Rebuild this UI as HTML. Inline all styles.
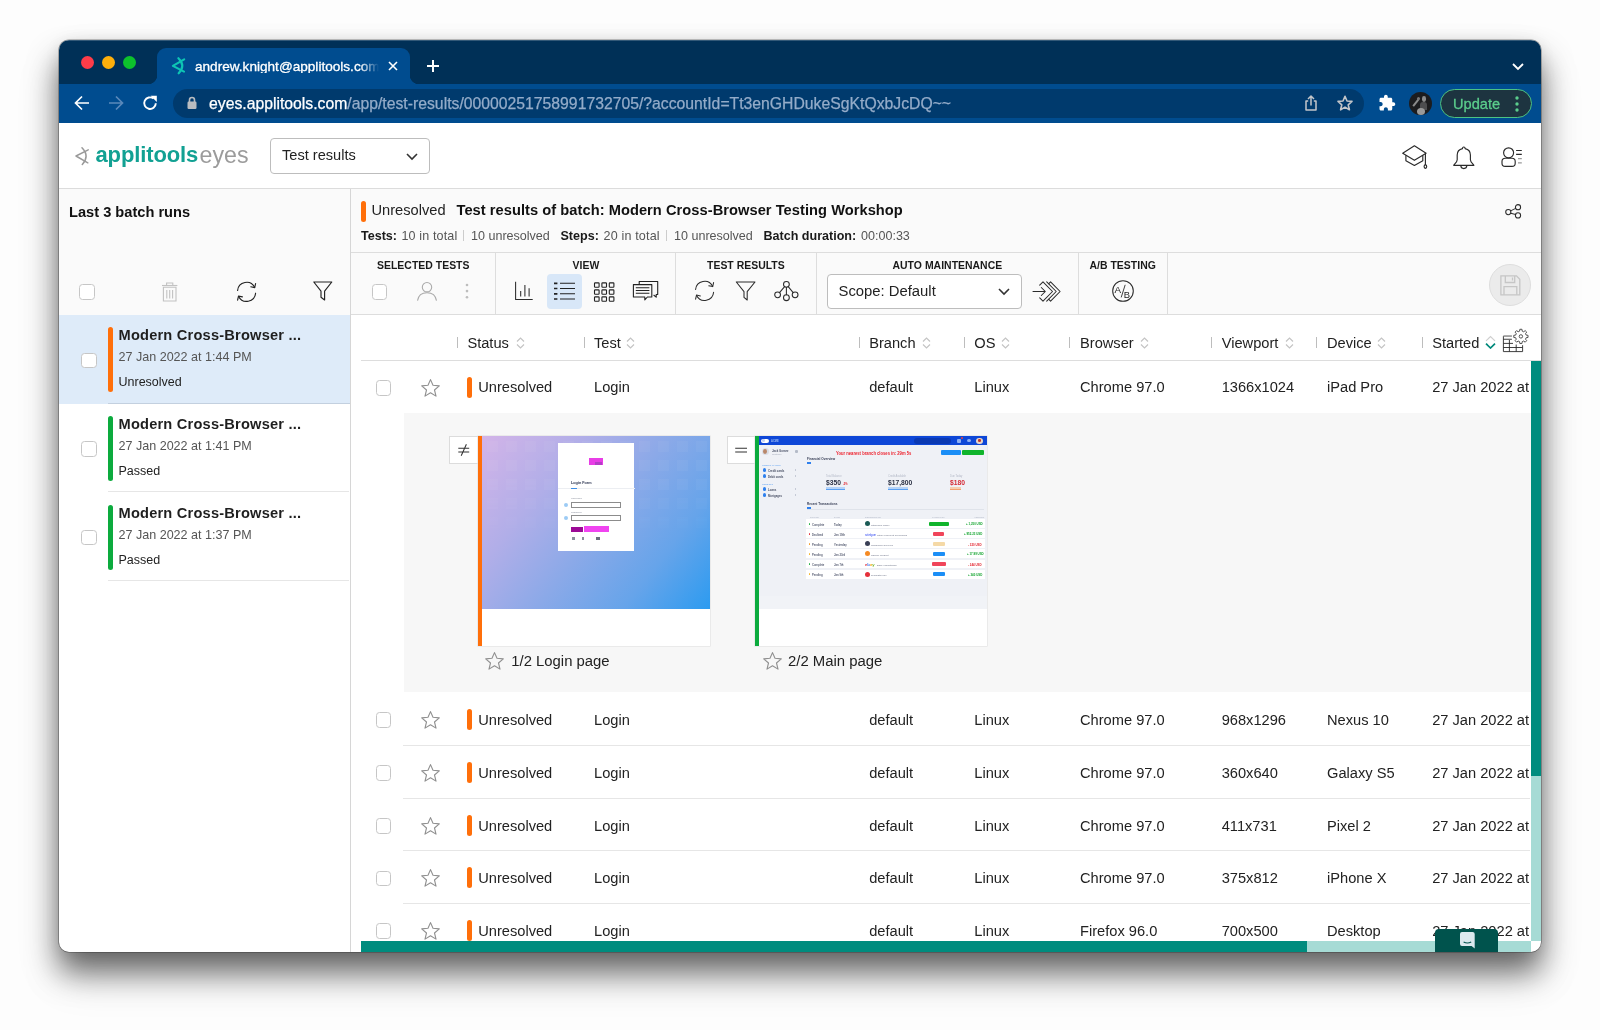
<!DOCTYPE html>
<html><head><meta charset="utf-8"><title>Applitools Eyes</title>
<style>
*{box-sizing:border-box;margin:0;padding:0}
html,body{width:1600px;height:1030px;overflow:hidden;background:#fdfdfd}
body{font-family:"Liberation Sans",Arial,sans-serif;color:#1e1e1e;position:relative}
.win{position:absolute;left:59px;top:40px;width:1482px;height:912px;border-radius:10px;overflow:hidden;background:#fff;
 box-shadow:0 0 0 .6px rgba(0,0,0,.42),0 20px 30px rgba(0,0,0,.53),0 24px 46px rgba(0,0,0,.14),0 2px 16px rgba(0,0,0,.08)}
.pg{position:absolute;left:-59px;top:-40px;width:1600px;height:1030px;will-change:transform}
.a{position:absolute}
.t{position:absolute;white-space:nowrap;line-height:1}
/* chrome */
.titlebar{left:59px;top:40px;width:1482px;height:44px;background:#003057}
.toolbar{left:59px;top:84px;width:1482px;height:39px;background:#004c8f}
.tab{left:157px;top:48px;width:253px;height:36px;background:#004c8f;border-radius:9px 9px 0 0}
.tab:before,.tab:after{content:"";position:absolute;bottom:0;width:9px;height:9px}
.tab:before{left:-9px;background:radial-gradient(circle at 0 0,transparent 9px,#004c8f 9.5px)}
.tab:after{right:-9px;background:radial-gradient(circle at 100% 0,transparent 9px,#004c8f 9.5px)}
.dot{width:13px;height:13px;border-radius:50%;top:56px}
.omni{left:173px;top:89px;width:1191px;height:29px;border-radius:15px;background:#003a6d}

.cb{position:absolute;width:16px;height:16px;border:1px solid #c6c6c6;border-radius:3.5px;background:#fff}
.bar{position:absolute;width:5px;border-radius:2.5px}
.or{background:#ff6f0a}.gr{background:#0cab3e}
.sbt{font-size:14.63px;font-weight:700;color:#1f1f1f;letter-spacing:.2px}
.sbd{font-size:12.55px;color:#555}
.sbs{font-size:12.5px;color:#222}

.ln{position:absolute;background:#dddddd}
.tl{font-size:10.45px;font-weight:700;color:#1a1a1a;letter-spacing:.02px}
.st{font-size:12.55px;color:#555}
.st b{color:#1a1a1a}
.th{font-size:14.65px;color:#222}
.td{font-size:14.65px;color:#222}
.hs{position:absolute;width:1px;height:11px;top:337px;background:#bdbdbd}
.ic{position:absolute;fill:none;stroke:#2b2b2b;stroke-width:1.05;stroke-linecap:round;stroke-linejoin:round}

.tn{position:absolute;overflow:hidden}
.tx{position:absolute;white-space:nowrap;line-height:1;transform-origin:0 0}
.k{position:absolute}
</style></head><body>
<div class="win"><div class="pg">
<!-- browser chrome -->
<div class="a titlebar"></div>
<div class="a toolbar"></div>
<div class="a tab"></div>
<div class="a dot" style="left:81px;background:#fe3c49"></div>
<div class="a dot" style="left:102px;background:#fdaf0b"></div>
<div class="a dot" style="left:123px;background:#0dc12c"></div>
<div class="t" style="left:195px;top:59.700px;font-size:13.6px;color:#fff;-webkit-text-stroke:.3px #fff;width:185px;overflow:hidden;-webkit-mask-image:linear-gradient(90deg,#000 165px,transparent 184px)">andrew.knight@applitools.com</div>
<div class="a omni"></div>
<div class="t" style="left:209px;top:96px;font-size:15.75px;color:#94acc9;-webkit-text-stroke:.25px"><span style="color:#fff">eyes.applitools.com</span>/app/test-results/00000251758991732705/?accountId=Tt3enGHDukeSgKtQxbJcDQ~~</div>

<!-- tab favicon -->
<svg class="a" style="left:171px;top:57px" width="17" height="18" viewBox="0 0 17 18"><g fill="none" stroke="#0ec5b4" stroke-width="2.1" stroke-linecap="round" stroke-linejoin="round"><path d="M13.2 2.3 L1.9 8.9 L13 14.600"/><path d="M7.4 1.200 Q15 8.500 7.700 16.300"/></g></svg>
<!-- tab close / new tab / chevron -->
<svg class="a" style="left:387px;top:60px" width="12" height="12" viewBox="0 0 12 12"><path d="M2 2 L10 10 M10 2 L2 10" stroke="#fff" stroke-width="1.6" fill="none"/></svg>
<svg class="a" style="left:426px;top:59px" width="14" height="14" viewBox="0 0 14 14"><path d="M7 1 V13 M1 7 H13" stroke="#fff" stroke-width="2" fill="none"/></svg>
<svg class="a" style="left:1511px;top:62px" width="14" height="10" viewBox="0 0 14 10"><path d="M2 2 L7 7 L12 2" stroke="#fff" stroke-width="1.8" fill="none"/></svg>
<!-- nav -->
<svg class="a" style="left:73px;top:94px" width="18" height="18" viewBox="0 0 18 18"><path d="M16 9 H3 M9 2.5 L2.5 9 L9 15.5" stroke="#fff" stroke-width="1.7" fill="none"/></svg>
<svg class="a" style="left:107px;top:94px" width="18" height="18" viewBox="0 0 18 18"><path d="M2 9 H15 M9 2.5 L15.5 9 L9 15.5" stroke="#5a89ba" stroke-width="1.7" fill="none"/></svg>
<svg class="a" style="left:141px;top:94px" width="18" height="18" viewBox="0 0 18 18"><path d="M14.800 9.200 A5.800 5.800 0 1 1 12.600 4.600" stroke="#fff" stroke-width="1.900" fill="none"/><path d="M9.600 1.800 H15.800 V8 Z" fill="#fff"/></svg>
<!-- lock -->
<svg class="a" style="left:186px;top:96px" width="12" height="14" viewBox="0 0 12 14"><rect x="1.5" y="5.5" width="9" height="7.5" rx="1.2" fill="#b9bcc0"/><path d="M3.5 6 V4 A2.5 2.5 0 0 1 8.500 4 V6" stroke="#b9bcc0" stroke-width="1.6" fill="none"/></svg>
<!-- share -->
<svg class="a" style="left:1303px;top:94px" width="16" height="18" viewBox="0 0 16 18"><g fill="none" stroke="#c3c6ca" stroke-width="1.5" stroke-linejoin="round"><path d="M5.2 7 H3 V16 H13 V7 H10.800"/><path d="M8 11.500 V2.200 M5 5 L8 2 L11 5"/></g></svg>
<!-- star -->
<svg class="a" style="left:1336px;top:94px" width="18" height="18" viewBox="0 0 18 18"><path d="M9 2.300 L11 7 L16 7.400 L12.200 10.800 L13.400 15.800 L9 13.100 L4.600 15.800 L5.800 10.800 L2 7.400 L7 7 Z" fill="none" stroke="#c3c6ca" stroke-width="1.6" stroke-linejoin="round"/></svg>
<!-- puzzle -->
<svg class="a" style="left:1378px;top:94px" width="18" height="18" viewBox="0 0 24 24"><path fill="#fff" d="M20.500 11H19V7c0-1.100-.9-2-2-2h-4V3.500C13 2.120 11.880 1 10.500 1S8 2.120 8 3.500V5H4c-1.100 0-1.990.9-1.990 2v3.800H3.500c1.490 0 2.700 1.210 2.700 2.700s-1.210 2.700-2.700 2.700H2V20c0 1.100.9 2 2 2h3.800v-1.500c0-1.490 1.210-2.700 2.700-2.700 1.490 0 2.700 1.210 2.700 2.700V22H17c1.100 0 2-.9 2-2v-4h1.500c1.380 0 2.500-1.120 2.500-2.500S21.880 11 20.500 11z"/></svg>
<!-- avatar -->
<div class="a" style="left:1409px;top:92px;width:23px;height:23px;border-radius:50%;background:#1c1c1e;overflow:hidden"><div class="a" style="left:12.500px;top:4px;width:4.500px;height:5.500px;border-radius:50%;background:#8c8c8c"></div><div class="a" style="left:10.500px;top:9.500px;width:7px;height:8px;border-radius:3px 3px 0 0;background:#4d4d4f"></div><div class="a" style="left:7.500px;top:15.500px;width:8px;height:7px;border-radius:50%;background:#9a9a9a"></div><div class="a" style="left:5.500px;top:6px;width:1.600px;height:9px;background:#8a8a8a;transform:rotate(38deg)"></div><div class="a" style="left:7.500px;top:4.500px;width:3px;height:3px;border-radius:50%;background:#777"></div></div>
<!-- update -->
<div class="a" style="left:1440px;top:89px;width:92px;height:29px;border-radius:15px;background:#1d3440;border:1.3px solid #4cc384"></div>
<div class="t" style="left:1453px;top:96.500px;font-size:14.6px;color:#5bcd8c;-webkit-text-stroke:.3px #5bcd8c">Update</div>
<svg class="a" style="left:1514px;top:95px" width="6" height="18" viewBox="0 0 6 18"><g fill="#5bcd8c"><circle cx="3" cy="3" r="1.7"/><circle cx="3" cy="9" r="1.7"/><circle cx="3" cy="15" r="1.700"/></g></svg>
<!--CHROME-ICONS-->

<!-- app header -->
<div class="a" style="left:59px;top:188px;width:1482px;height:1px;background:#dcdcdc"></div>
<svg class="a" style="left:73px;top:146px" width="18" height="20" viewBox="0 0 18 20"><g fill="none" stroke="#9a9a9a" stroke-width="1.5" stroke-linecap="round" stroke-linejoin="round"><path d="M15.200 3.800 L3 10 L14.800 16.800"/><path d="M9 1.800 Q17 10 9.300 18.400"/></g></svg>
<div class="t" style="left:95.5px;top:144px;font-size:22px;font-weight:700;color:#12a193;letter-spacing:-0.12px">applitools</div>
<div class="t" style="left:199.5px;top:143.600px;font-size:23.2px;color:#9b9b9b">eyes</div>
<div class="a" style="left:270px;top:138px;width:160px;height:36px;border:1px solid #bdbdbd;border-radius:4px;background:#fff"></div>
<div class="t" style="left:282px;top:148px;font-size:14.6px;color:#222">Test results</div>
<svg class="a" style="left:405px;top:152px" width="14" height="9" viewBox="0 0 14 9"><path d="M2 2 L7 7 L12 2" stroke="#333" stroke-width="1.600" fill="none"/></svg>
<!-- grad cap -->
<svg class="a" style="left:1400px;top:143px" width="30" height="28" viewBox="0 0 30 28"><g fill="none" stroke="#2a2a2a" stroke-width="1.15" stroke-linejoin="round"><path d="M14.400 2.800 L26.100 10.300 L14.400 17.300 L2.700 10.300 Z"/><path d="M5.900 12.300 V17.800 L14.400 22.500 L22.800 17.800 V12.300"/><path d="M25.400 10.800 V22"/><ellipse cx="25.400" cy="23.600" rx="1.300" ry="1.700"/></g></svg>
<!-- bell -->
<svg class="a" style="left:1450px;top:143px" width="28" height="28" viewBox="0 0 28 28"><g fill="none" stroke="#2a2a2a" stroke-width="1.15" stroke-linejoin="round"><path d="M13.800 4 C12.900 4 12.400 4.800 12.500 5.600 C9.300 6.300 7.200 8.900 7.200 12 V16.800 C7.200 19 5 20.600 3.700 22.300 H23.900 C22.600 20.600 20.400 19 20.400 16.800 V12 C20.400 8.900 18.300 6.300 15.100 5.600 C15.200 4.800 14.700 4 13.800 4 Z"/><path d="M10.800 22.600 A3 3 0 0 0 16.800 22.600"/></g></svg>
<!-- user list -->
<svg class="a" style="left:1498px;top:143px" width="28" height="28" viewBox="0 0 28 28"><g fill="none" stroke="#2a2a2a" stroke-width="1.15"><circle cx="10.600" cy="9.800" r="5"/><rect x="4" y="15.200" width="13.200" height="8.200" rx="3.200"/><path d="M18.100 7.500 H23.800 M18.100 11.400 H23.800"/><path d="M20 15.600 H23.800 M20 19.800 H23.800" stroke="#9a9a9a"/></g></svg>
<!--APP-HEADER-->

<!-- sidebar -->
<div class="a" style="left:59px;top:189px;width:291px;height:126px;background:#fafafa"></div>
<div class="a" style="left:350px;top:189px;width:1px;height:763px;background:#d6d6d6"></div>
<div class="t" style="left:69px;top:205px;font-size:14.63px;font-weight:700;color:#111">Last 3 batch runs</div>
<div class="cb" style="left:79px;top:284px"></div>
<!-- trash -->
<svg class="a" style="left:159px;top:280px" width="22" height="24" viewBox="0 0 22 24"><g fill="none" stroke="#c2c2c2" stroke-width="1.1"><path d="M3 5.500 H18.400"/><path d="M7.600 5.300 V3 H13.800 V5.300"/><path d="M4.400 7.300 H17 V21 H4.400 Z"/><path d="M7.800 10 V18.600 M10.700 10 V18.600 M13.600 10 V18.600"/></g></svg>
<!-- refresh -->
<svg class="a" style="left:234px;top:279px" width="26" height="26" viewBox="0 0 26 26"><g fill="none" stroke="#222" stroke-width="1.15" stroke-linecap="round" stroke-linejoin="round"><path d="M3.600 11.500 A9 9 0 0 1 20.600 8.300"/><path d="M21.600 4.500 L20.700 8.600 L16.800 7.800"/><path d="M21.600 14.200 A9 9 0 0 1 4.600 17.400"/><path d="M3.600 21.200 L4.500 17.100 L8.400 17.900"/></g></svg>
<!-- funnel -->
<svg class="a" style="left:311px;top:279px" width="24" height="24" viewBox="0 0 24 24"><path d="M2.800 3 H20.800 L13.600 12.200 V21 L10 18.200 V12.200 Z" fill="none" stroke="#222" stroke-width="1.150" stroke-linejoin="round"/></svg>
<!-- item 1 -->
<div class="a" style="left:59px;top:314.500px;width:291px;height:89px;background:#deebf9"></div>
<div class="a" style="left:108px;top:402.500px;width:242px;height:1px;background:#c3d0df"></div>
<div class="cb" style="left:81px;top:352.500px;width:15.500px;height:15.500px"></div>
<div class="bar or" style="left:108px;top:327px;height:65px"></div>
<div class="t sbt" style="left:118.500px;top:328px">Modern Cross-Browser ...</div>
<div class="t sbd" style="left:118.500px;top:351px">27 Jan 2022 at 1:44 PM</div>
<div class="t sbs" style="left:118.500px;top:375.500px">Unresolved</div>
<!-- item 2 -->
<div class="a" style="left:108px;top:491px;width:241px;height:1px;background:#e6e6e6"></div>
<div class="cb" style="left:81px;top:441px;width:15.500px;height:15.500px"></div>
<div class="bar gr" style="left:108px;top:416px;height:65px"></div>
<div class="t sbt" style="left:118.500px;top:417px">Modern Cross-Browser ...</div>
<div class="t sbd" style="left:118.500px;top:440px">27 Jan 2022 at 1:41 PM</div>
<div class="t sbs" style="left:118.500px;top:464.500px">Passed</div>
<!-- item 3 -->
<div class="a" style="left:108px;top:580px;width:241px;height:1px;background:#e6e6e6"></div>
<div class="cb" style="left:81px;top:529.500px;width:15.500px;height:15.500px"></div>
<div class="bar gr" style="left:108px;top:504.500px;height:65.500px"></div>
<div class="t sbt" style="left:118.500px;top:506px">Modern Cross-Browser ...</div>
<div class="t sbd" style="left:118.500px;top:529px">27 Jan 2022 at 1:37 PM</div>
<div class="t sbs" style="left:118.500px;top:553.500px">Passed</div>
<!--SIDEBAR-->

<!-- main: batch header -->
<div class="a" style="left:351px;top:189px;width:1190px;height:126px;background:#fafafa"></div>
<div class="ln" style="left:351px;top:252px;width:1190px;height:1px"></div>
<div class="ln" style="left:351px;top:314px;width:1190px;height:1px"></div>
<div class="bar or" style="left:361px;top:200.500px;height:21px"></div>
<div class="t" style="left:371.500px;top:202.600px;font-size:14.65px;color:#222">Unresolved</div>
<div class="t" style="left:456.500px;top:202.600px;font-size:14.65px;font-weight:700;color:#111;letter-spacing:.05px">Test results of batch: Modern Cross-Browser Testing Workshop</div>
<div class="t st" style="left:361px;top:229.6px"><b>Tests:</b></div>
<div class="t st" style="left:401.500px;top:229.6px;letter-spacing:.13px">10 in total</div>
<div class="a" style="left:463px;top:230px;width:1px;height:11px;background:#ccc"></div>
<div class="t st" style="left:471px;top:229.6px">10 unresolved</div>
<div class="t st" style="left:560.500px;top:229.6px"><b>Steps:</b></div>
<div class="t st" style="left:603.500px;top:229.6px;letter-spacing:.17px">20 in total</div>
<div class="a" style="left:666.200px;top:230px;width:1px;height:11px;background:#ccc"></div>
<div class="t st" style="left:674px;top:229.6px">10 unresolved</div>
<div class="t st" style="left:763.500px;top:229.6px"><b>Batch duration:</b></div>
<div class="t st" style="left:861px;top:229.6px">00:00:33</div>
<!-- share -->
<svg class="ic" style="left:1502px;top:202px" width="22" height="18" viewBox="0 0 22 18"><circle cx="6.300" cy="10.100" r="2.600"/><circle cx="16" cy="5.200" r="2.600"/><circle cx="16" cy="13.400" r="2.600"/><path d="M8.600 8.900 L13.700 6.400 M8.700 11.200 L13.700 12.400"/></svg>
<!-- toolbar separators -->
<div class="ln" style="left:495px;top:253px;width:1px;height:61px"></div>
<div class="ln" style="left:674.500px;top:253px;width:1px;height:61px"></div>
<div class="ln" style="left:815.500px;top:253px;width:1px;height:61px"></div>
<div class="ln" style="left:1078px;top:253px;width:1px;height:61px"></div>
<div class="ln" style="left:1167px;top:253px;width:1px;height:61px"></div>
<div class="t tl" style="left:377px;top:261.200px">SELECTED TESTS</div>
<div class="t tl" style="left:572.500px;top:261.200px">VIEW</div>
<div class="t tl" style="left:707px;top:261.200px">TEST RESULTS</div>
<div class="t tl" style="left:892.500px;top:261.200px">AUTO MAINTENANCE</div>
<div class="t tl" style="left:1089.500px;top:261.200px">A/B TESTING</div>

<!-- selected tests -->
<div class="cb" style="left:371.500px;top:284px;width:15.500px;height:15.500px"></div>
<svg class="a" style="left:415px;top:280px" width="24" height="23" viewBox="0 0 24 23"><g fill="none" stroke="#ababab" stroke-width="1.100"><circle cx="12" cy="7.200" r="4.700"/><path d="M2.500 20.700 C3.500 14.600 8 12.800 12 12.800 C16 12.800 20.500 14.600 21.500 20.700"/></g></svg>
<svg class="a" style="left:464px;top:282px" width="6" height="18" viewBox="0 0 6 18"><g fill="#bdbdbd"><circle cx="3" cy="3" r="1.300"/><circle cx="3" cy="9.100" r="1.300"/><circle cx="3" cy="15.200" r="1.300"/></g></svg>
<!-- view: bar chart -->
<svg class="ic" style="left:512px;top:279px" width="24" height="24" viewBox="0 0 24 24"><path d="M3.600 2.700 V20.400 H20.700" stroke-linecap="butt"/><path d="M8.700 12 V17.600 M12.900 6 V17.600 M17.100 9.300 V17.600" stroke-linecap="butt"/></svg>
<!-- view: list (active) -->
<div class="a" style="left:546.500px;top:273.500px;width:35.500px;height:35.500px;border-radius:4px;background:#d8e7f8"></div>
<svg class="a" style="left:551px;top:279px" width="27" height="24" viewBox="0 0 27 24"><g fill="none" stroke="#222"><path d="M3 4.300 H6.400 M3 9.500 H6.400 M3 14.800 H6.400 M3 20 H6.400" stroke-width="1.700"/><path d="M9 4.300 H24 M9 9.500 H24 M9 14.800 H24 M9 20 H24" stroke-width="1.100"/></g></svg>
<!-- view: grid -->
<svg class="a" style="left:592px;top:280px" width="24" height="24" viewBox="0 0 24 24"><g fill="none" stroke="#222" stroke-width="1.100"><rect x="2.500" y="2.900" width="4.600" height="4.300" rx=".7"/><rect x="9.900" y="2.900" width="4.600" height="4.300" rx=".7"/><rect x="17.300" y="2.900" width="4.600" height="4.300" rx=".7"/><rect x="2.500" y="9.900" width="4.600" height="4.300" rx=".7"/><rect x="9.900" y="9.900" width="4.600" height="4.300" rx=".7"/><rect x="17.300" y="9.900" width="4.600" height="4.300" rx=".7"/><rect x="2.500" y="16.900" width="4.600" height="4.300" rx=".7"/><rect x="9.900" y="16.900" width="4.600" height="4.300" rx=".7"/><rect x="17.300" y="16.900" width="4.600" height="4.300" rx=".7"/></g></svg>
<!-- view: comments -->
<svg class="a" style="left:631px;top:279px" width="30" height="24" viewBox="0 0 30 24"><g fill="none" stroke="#222" stroke-width="1.100" stroke-linejoin="round"><path d="M8.200 5.500 V2.500 H26.700 V15.500 H25.200 V18.200 L22.600 16"/><path d="M2.400 5.600 H20.800 V18 H16.400 L13.800 20.800 V18 H2.400 Z" fill="#fafafa"/><path d="M4.800 8.700 H18.400 M4.800 11.500 H18.400 M4.800 14.300 H18.400"/></g></svg>
<!-- test results: refresh, funnel, branch -->
<svg class="ic" style="left:691.500px;top:278px" width="26" height="26" viewBox="0 0 26 26"><path d="M3.600 11.500 A9 9 0 0 1 20.600 8.300"/><path d="M21.600 4.500 L20.700 8.600 L16.800 7.800"/><path d="M21.600 14.200 A9 9 0 0 1 4.600 17.400"/><path d="M3.600 21.200 L4.500 17.100 L8.400 17.900"/></svg>
<svg class="ic" style="left:734px;top:279px" width="24" height="24" viewBox="0 0 24 24"><path d="M2.300 3 H21 L13.200 12.600 V21 L10 18.400 V12.600 Z"/></svg>
<svg class="ic" style="left:772px;top:278px" width="28" height="26" viewBox="0 0 28 26"><circle cx="14.400" cy="6.300" r="2.900"/><circle cx="5.600" cy="16.800" r="2.900"/><circle cx="23.100" cy="16.800" r="2.900"/><circle cx="14.400" cy="19.700" r="2.900"/><path d="M14.400 9.200 V16.800 M12.600 8.600 L7.500 14.600 M16.200 8.600 L21.200 14.600"/></svg>
<!-- auto maintenance -->
<div class="a" style="left:827px;top:273.500px;width:195px;height:35px;border:1px solid #bdbdbd;border-radius:4px;background:#fff"></div>
<div class="t" style="left:838.500px;top:283.500px;font-size:14.83px;color:#222">Scope: Default</div>
<svg class="a" style="left:996.500px;top:287px" width="14" height="9" viewBox="0 0 14 9"><path d="M2 2 L7 7 L12 2" stroke="#333" stroke-width="1.600" fill="none"/></svg>
<svg class="ic" style="left:1031px;top:279px" width="33" height="25" viewBox="0 0 33 25"><path d="M2 12.500 H14 M10.300 8.500 L14.300 12.500 L10.300 16.500"/><path d="M8.700 6.200 L12 2.900 L21.500 12.500 L12 22.100 L8.700 18.800"/><path d="M15.700 2.900 L25.200 12.500 L15.700 22.100"/><path d="M19.600 2.900 L29.100 12.500 L19.600 22.100 L17.800 20.300 M19.600 2.900 L17.800 4.700"/></svg>
<!-- a/b -->
<svg class="a" style="left:1111px;top:279px" width="24" height="24" viewBox="0 0 24 24"><circle cx="12" cy="12" r="10.300" fill="none" stroke="#2b2b2b" stroke-width="1.050"/><path d="M14.200 5.800 L10.200 18.400" stroke="#2b2b2b" stroke-width=".9" fill="none"/><text x="3.600" y="13.600" font-family="Liberation Sans,Arial,sans-serif" font-size="9.800" fill="#222">A</text><text x="12.800" y="18.800" font-family="Liberation Sans,Arial,sans-serif" font-size="9.400" fill="#222">B</text></svg>
<!-- save -->
<div class="a" style="left:1489px;top:264px;width:42px;height:42px;border-radius:50%;background:#ebebeb;border:1px solid #dedede"></div>
<svg class="a" style="left:1499px;top:274px" width="23" height="23" viewBox="0 0 23 23"><g fill="none" stroke="#c6c6c6" stroke-width="1.300" stroke-linejoin="miter"><path d="M1.900 1.900 H17.500 L20.800 5.200 V20.800 H1.900 Z"/><path d="M6.300 2 V8.500 H15.700 V2"/><path d="M13.500 3.500 V6.500"/><path d="M5 20.800 V12.600 H17.800 V20.800"/></g></svg>

<!-- table header -->
<div class="ln" style="left:361px;top:359.500px;width:1180px;height:1px"></div>
<div class="hs" style="left:457.0px"></div><div class="t th" style="left:467.4px;top:335.700px">Status</div><svg class="a" style="left:515.5px;top:335.500px" width="9" height="14" viewBox="0 0 9 14"><path d="M1 5.500 L4.500 2 L8 5.500" fill="none" stroke="#c4c4c4" stroke-width="1.200"/><path d="M1 8.500 L4.500 12 L8 8.500" fill="none" stroke="#c4c4c4" stroke-width="1.200"/></svg>
<div class="hs" style="left:583.5px"></div><div class="t th" style="left:594.0px;top:335.700px">Test</div><svg class="a" style="left:626.0px;top:335.500px" width="9" height="14" viewBox="0 0 9 14"><path d="M1 5.500 L4.500 2 L8 5.500" fill="none" stroke="#c4c4c4" stroke-width="1.200"/><path d="M1 8.500 L4.500 12 L8 8.500" fill="none" stroke="#c4c4c4" stroke-width="1.200"/></svg>
<div class="hs" style="left:858.5px"></div><div class="t th" style="left:869.2px;top:335.700px">Branch</div><svg class="a" style="left:922.0px;top:335.500px" width="9" height="14" viewBox="0 0 9 14"><path d="M1 5.500 L4.500 2 L8 5.500" fill="none" stroke="#c4c4c4" stroke-width="1.200"/><path d="M1 8.500 L4.500 12 L8 8.500" fill="none" stroke="#c4c4c4" stroke-width="1.200"/></svg>
<div class="hs" style="left:964.0px"></div><div class="t th" style="left:974.3px;top:335.700px">OS</div><svg class="a" style="left:1000.5px;top:335.500px" width="9" height="14" viewBox="0 0 9 14"><path d="M1 5.500 L4.500 2 L8 5.500" fill="none" stroke="#c4c4c4" stroke-width="1.200"/><path d="M1 8.500 L4.500 12 L8 8.500" fill="none" stroke="#c4c4c4" stroke-width="1.200"/></svg>
<div class="hs" style="left:1068.5px"></div><div class="t th" style="left:1080.0px;top:335.700px">Browser</div><svg class="a" style="left:1139.5px;top:335.500px" width="9" height="14" viewBox="0 0 9 14"><path d="M1 5.500 L4.500 2 L8 5.500" fill="none" stroke="#c4c4c4" stroke-width="1.200"/><path d="M1 8.500 L4.500 12 L8 8.500" fill="none" stroke="#c4c4c4" stroke-width="1.200"/></svg>
<div class="hs" style="left:1211.0px"></div><div class="t th" style="left:1221.7px;top:335.700px">Viewport</div><svg class="a" style="left:1285.0px;top:335.500px" width="9" height="14" viewBox="0 0 9 14"><path d="M1 5.500 L4.500 2 L8 5.500" fill="none" stroke="#c4c4c4" stroke-width="1.200"/><path d="M1 8.500 L4.500 12 L8 8.500" fill="none" stroke="#c4c4c4" stroke-width="1.200"/></svg>
<div class="hs" style="left:1316.0px"></div><div class="t th" style="left:1327.0px;top:335.700px">Device</div><svg class="a" style="left:1377.0px;top:335.500px" width="9" height="14" viewBox="0 0 9 14"><path d="M1 5.500 L4.500 2 L8 5.500" fill="none" stroke="#c4c4c4" stroke-width="1.200"/><path d="M1 8.500 L4.500 12 L8 8.500" fill="none" stroke="#c4c4c4" stroke-width="1.200"/></svg>
<div class="hs" style="left:1422.0px"></div><div class="t th" style="left:1432.2px;top:335.700px">Started</div><svg class="a" style="left:1485.200px;top:335px" width="11" height="14" viewBox="0 0 11 14"><path d="M1 5.900 L5.500 1.500 L10 5.900" fill="none" stroke="#cfcfcf" stroke-width="1.200"/><path d="M1 8.600 L5.500 13 L10 8.600" fill="none" stroke="#00897b" stroke-width="1.700"/></svg>
<svg class="a" style="left:1502px;top:328px" width="30" height="26" viewBox="0 0 30 26"><g fill="none" stroke="#2a2a2a" stroke-width=".9"><path d="M1.400 8.100 V23.600 H20.600 V17.200 M1.400 11.250 H9.900 M1.400 15.400 H11 M1.400 19.500 H20.600 M7.400 12 V23.600 M14.200 16.500 V23.600"/><path d="M1.400 8.050 H9.900" stroke="#777" stroke-width="1.300"/></g><path d="M24.14 7.09 L26.02 7.34 L26.02 9.46 L24.14 9.71 L23.53 11.18 L24.69 12.68 L23.18 14.19 L21.68 13.03 L20.21 13.64 L19.96 15.52 L17.84 15.52 L17.59 13.64 L16.12 13.03 L14.62 14.19 L13.11 12.68 L14.27 11.18 L13.66 9.71 L11.78 9.46 L11.78 7.34 L13.66 7.09 L14.27 5.62 L13.11 4.12 L14.62 2.61 L16.12 3.77 L17.59 3.16 L17.84 1.28 L19.96 1.28 L20.21 3.16 L21.68 3.77 L23.18 2.61 L24.69 4.12 L23.53 5.62 Z" fill="#fff" stroke="#4a4a4a" stroke-width=".95" stroke-linejoin="round"/><circle cx="18.90" cy="8.40" r="1.700" fill="none" stroke="#4a4a4a" stroke-width=".95"/></svg>
<!-- rows -->
<div class="cb" style="left:375.500px;top:380.2px;width:15.500px;height:15.500px"></div><svg class="a" style="left:419.500px;top:377.7px" width="21" height="20" viewBox="0 0 21 20"><path d="M10.500 1.600 L13 7.300 L19.300 7.900 L14.500 12 L16 18.100 L10.500 14.800 L5 18.100 L6.500 12 L1.700 7.900 L8 7.300 Z" fill="none" stroke="#8f8f8f" stroke-width="1.100" stroke-linejoin="round"/></svg><div class="bar or" style="left:467px;top:376.9px;height:21px"></div><div class="t td" style="left:478.2px;top:380.1px">Unresolved</div><div class="t td" style="left:594.0px;top:380.1px">Login</div><div class="t td" style="left:869.2px;top:380.1px">default</div><div class="t td" style="left:974.3px;top:380.1px">Linux</div><div class="t td" style="left:1080.0px;top:380.1px">Chrome 97.0</div><div class="t td" style="left:1221.7px;top:380.1px">1366x1024</div><div class="t td" style="left:1327.0px;top:380.1px">iPad Pro</div><div class="t td" style="left:1432.200px;top:380.1px;width:98px;overflow:hidden">27 Jan 2022 at 1:44 PM</div>
<div class="cb" style="left:375.500px;top:712.4px;width:15.500px;height:15.500px"></div><svg class="a" style="left:419.500px;top:709.9px" width="21" height="20" viewBox="0 0 21 20"><path d="M10.500 1.600 L13 7.300 L19.300 7.900 L14.500 12 L16 18.100 L10.500 14.800 L5 18.100 L6.500 12 L1.700 7.900 L8 7.300 Z" fill="none" stroke="#8f8f8f" stroke-width="1.100" stroke-linejoin="round"/></svg><div class="bar or" style="left:467px;top:709.1px;height:21px"></div><div class="t td" style="left:478.2px;top:712.9px">Unresolved</div><div class="t td" style="left:594.0px;top:712.9px">Login</div><div class="t td" style="left:869.2px;top:712.9px">default</div><div class="t td" style="left:974.3px;top:712.9px">Linux</div><div class="t td" style="left:1080.0px;top:712.9px">Chrome 97.0</div><div class="t td" style="left:1221.7px;top:712.9px">968x1296</div><div class="t td" style="left:1327.0px;top:712.9px">Nexus 10</div><div class="t td" style="left:1432.200px;top:712.9px;width:98px;overflow:hidden">27 Jan 2022 at 1:44 PM</div>
<div class="ln" style="left:403px;top:744.9px;width:1127px;height:1px;background:#e6e6e6"></div>
<div class="cb" style="left:375.500px;top:765.2px;width:15.500px;height:15.500px"></div><svg class="a" style="left:419.500px;top:762.7px" width="21" height="20" viewBox="0 0 21 20"><path d="M10.500 1.600 L13 7.300 L19.300 7.900 L14.500 12 L16 18.100 L10.500 14.800 L5 18.100 L6.500 12 L1.700 7.900 L8 7.300 Z" fill="none" stroke="#8f8f8f" stroke-width="1.100" stroke-linejoin="round"/></svg><div class="bar or" style="left:467px;top:761.9px;height:21px"></div><div class="t td" style="left:478.2px;top:765.7px">Unresolved</div><div class="t td" style="left:594.0px;top:765.7px">Login</div><div class="t td" style="left:869.2px;top:765.7px">default</div><div class="t td" style="left:974.3px;top:765.7px">Linux</div><div class="t td" style="left:1080.0px;top:765.7px">Chrome 97.0</div><div class="t td" style="left:1221.7px;top:765.7px">360x640</div><div class="t td" style="left:1327.0px;top:765.7px">Galaxy S5</div><div class="t td" style="left:1432.200px;top:765.7px;width:98px;overflow:hidden">27 Jan 2022 at 1:44 PM</div>
<div class="ln" style="left:403px;top:797.7px;width:1127px;height:1px;background:#e6e6e6"></div>
<div class="cb" style="left:375.500px;top:818.0px;width:15.500px;height:15.500px"></div><svg class="a" style="left:419.500px;top:815.5px" width="21" height="20" viewBox="0 0 21 20"><path d="M10.500 1.600 L13 7.300 L19.300 7.900 L14.500 12 L16 18.100 L10.500 14.800 L5 18.100 L6.500 12 L1.700 7.900 L8 7.300 Z" fill="none" stroke="#8f8f8f" stroke-width="1.100" stroke-linejoin="round"/></svg><div class="bar or" style="left:467px;top:814.7px;height:21px"></div><div class="t td" style="left:478.2px;top:818.5px">Unresolved</div><div class="t td" style="left:594.0px;top:818.5px">Login</div><div class="t td" style="left:869.2px;top:818.5px">default</div><div class="t td" style="left:974.3px;top:818.5px">Linux</div><div class="t td" style="left:1080.0px;top:818.5px">Chrome 97.0</div><div class="t td" style="left:1221.7px;top:818.5px">411x731</div><div class="t td" style="left:1327.0px;top:818.5px">Pixel 2</div><div class="t td" style="left:1432.200px;top:818.5px;width:98px;overflow:hidden">27 Jan 2022 at 1:44 PM</div>
<div class="ln" style="left:403px;top:850.4px;width:1127px;height:1px;background:#e6e6e6"></div>
<div class="cb" style="left:375.500px;top:870.7px;width:15.500px;height:15.500px"></div><svg class="a" style="left:419.500px;top:868.2px" width="21" height="20" viewBox="0 0 21 20"><path d="M10.500 1.600 L13 7.300 L19.300 7.900 L14.500 12 L16 18.100 L10.500 14.800 L5 18.100 L6.500 12 L1.700 7.900 L8 7.300 Z" fill="none" stroke="#8f8f8f" stroke-width="1.100" stroke-linejoin="round"/></svg><div class="bar or" style="left:467px;top:867.4px;height:21px"></div><div class="t td" style="left:478.2px;top:871.2px">Unresolved</div><div class="t td" style="left:594.0px;top:871.2px">Login</div><div class="t td" style="left:869.2px;top:871.2px">default</div><div class="t td" style="left:974.3px;top:871.2px">Linux</div><div class="t td" style="left:1080.0px;top:871.2px">Chrome 97.0</div><div class="t td" style="left:1221.7px;top:871.2px">375x812</div><div class="t td" style="left:1327.0px;top:871.2px">iPhone X</div><div class="t td" style="left:1432.200px;top:871.2px;width:98px;overflow:hidden">27 Jan 2022 at 1:44 PM</div>
<div class="ln" style="left:403px;top:903.1px;width:1127px;height:1px;background:#e6e6e6"></div>
<div class="cb" style="left:375.500px;top:923.4px;width:15.500px;height:15.500px"></div><svg class="a" style="left:419.500px;top:920.9px" width="21" height="20" viewBox="0 0 21 20"><path d="M10.500 1.600 L13 7.300 L19.300 7.900 L14.500 12 L16 18.100 L10.500 14.800 L5 18.100 L6.500 12 L1.700 7.900 L8 7.300 Z" fill="none" stroke="#8f8f8f" stroke-width="1.100" stroke-linejoin="round"/></svg><div class="bar or" style="left:467px;top:920.1px;height:21px"></div><div class="t td" style="left:478.2px;top:923.9px">Unresolved</div><div class="t td" style="left:594.0px;top:923.9px">Login</div><div class="t td" style="left:869.2px;top:923.9px">default</div><div class="t td" style="left:974.3px;top:923.9px">Linux</div><div class="t td" style="left:1080.0px;top:923.9px">Firefox 96.0</div><div class="t td" style="left:1221.7px;top:923.9px">700x500</div><div class="t td" style="left:1327.0px;top:923.9px">Desktop</div><div class="t td" style="left:1432.200px;top:923.9px;width:98px;overflow:hidden">27 Jan 2022 at 1:44 PM</div>
<!-- expanded -->
<div class="a" style="left:404px;top:413.300px;width:1127px;height:279px;background:#f7f7f7"></div>

<!-- thumb 1 -->
<div class="a" style="left:449px;top:435.800px;width:29.500px;height:28px;background:#fff;border:1px solid #dcdcdc"></div>
<svg class="a" style="left:456px;top:441.600px" width="16" height="16" viewBox="0 0 16 16"><path d="M2.300 6.200 H13.200 M2.300 10 H13.200 M10.400 2.300 L5.200 13.800" stroke="#333" stroke-width="1.050" fill="none"/></svg>
<div class="a" style="left:478px;top:435.800px;width:232px;height:210px;background:#fff;box-shadow:0 0 0 .6px #e2e2e2"></div>
<div class="a or" style="left:478px;top:435.800px;width:4px;height:210px"></div>
<div class="tn" style="left:482px;top:435.800px;width:228px;height:173.300px;background:linear-gradient(128deg,#d3b4e8 0%,#b1aee8 28%,#8ba9e8 52%,#66a4ea 76%,#2c9bf0 100%)">
 <div class="k" style="left:0;top:0;width:228px;height:110px;opacity:.3;background-image:linear-gradient(90deg,transparent 0,transparent 5px,rgba(255,255,255,.13) 5px,rgba(255,255,255,.13) 16px,transparent 16px),linear-gradient(0deg,rgba(140,160,230,.0),rgba(140,160,230,0));background-size:19px 19px;-webkit-mask-image:repeating-linear-gradient(180deg,transparent 0,transparent 5px,#000 5px,#000 16px,transparent 16px,transparent 19px),linear-gradient(180deg,#000 40%,transparent);-webkit-mask-composite:source-in;mask-composite:intersect"></div>
 <div class="k" style="left:76px;top:7px;width:76px;height:108.500px;background:#fff"></div>
 <div class="k" style="left:107.300px;top:22.500px;width:13.400px;height:7.200px;background:#e83de6"></div>
 <div class="k" style="left:113px;top:26.500px;width:7px;height:2.500px;background:#8f3fb0;opacity:.6"></div>
 <div class="tx" style="left:89.200px;top:45.200px;font-size:8px;font-weight:700;color:#2a3350;transform:scale(.47)">Login Form</div>
 <div class="k" style="left:76px;top:52.400px;width:76.500px;height:.5px;background:#eceef2"></div>
 <div class="k" style="left:89.200px;top:52px;width:5.500px;height:1.200px;background:#3d8fe8"></div>
 <div class="tx" style="left:89.200px;top:61.500px;font-size:8px;color:#8a8f9c;transform:scale(.3)">Username</div>
 <div class="k" style="left:89.200px;top:65.800px;width:49.500px;height:6.200px;border:.6px solid #8c8c8c;background:#fff"></div>
 <div class="k" style="left:82.300px;top:67px;width:4px;height:4px;border-radius:50%;background:#9ccbf5"></div>
 <div class="tx" style="left:89.200px;top:75.200px;font-size:8px;color:#8a8f9c;transform:scale(.3)">Password</div>
 <div class="k" style="left:89.200px;top:79.400px;width:49.500px;height:5.800px;border:.6px solid #8c8c8c;background:#fff"></div>
 <div class="k" style="left:82.300px;top:80.400px;width:4px;height:4px;border-radius:50%;background:#9ccbf5"></div>
 <div class="k" style="left:89.200px;top:91px;width:12px;height:5.600px;background:#9c0a96"></div>
 <div class="k" style="left:102.200px;top:90px;width:24.500px;height:6.600px;background:#f044f0"></div>
 <div class="k" style="left:89.500px;top:101.200px;width:3px;height:2.600px;background:#8a8f9c"></div>
 <div class="k" style="left:99.500px;top:101.200px;width:2px;height:2.600px;background:#8a8f9c"></div>
 <div class="k" style="left:114px;top:101.200px;width:3.500px;height:2.600px;background:#6a6f7c"></div>
</div>
<svg class="a" style="left:484px;top:650.700px" width="21" height="20" viewBox="0 0 21 20"><path d="M10.500 1.600 L13 7.300 L19.300 7.900 L14.500 12 L16 18.100 L10.500 14.800 L5 18.100 L6.500 12 L1.700 7.900 L8 7.300 Z" fill="none" stroke="#8f8f8f" stroke-width="1.100" stroke-linejoin="round"/></svg>
<div class="t" style="left:511.300px;top:654.300px;font-size:14.860px;color:#222">1/2 Login page</div>
<!-- thumb 2 -->
<div class="a" style="left:726.500px;top:435.800px;width:29.500px;height:28px;background:#fff;border:1px solid #dcdcdc"></div>
<svg class="a" style="left:733px;top:441.600px" width="16" height="16" viewBox="0 0 16 16"><path d="M2.200 6.300 H14 M2.200 10 H14" stroke="#333" stroke-width="1.050" fill="none"/></svg>
<div class="a" style="left:755.300px;top:435.800px;width:232.200px;height:210px;background:#fff;box-shadow:0 0 0 .6px #e2e2e2"></div>
<div class="a gr" style="left:755.300px;top:435.800px;width:4px;height:210px"></div>
<div class="tn" id="t2" style="left:759.300px;top:435.800px;width:228.200px;height:173.300px;background:#eff1f6">
<div class="k" style="left:-0.2px;top:-0.0px;width:228.8px;height:9.4px;background:#0e47d7;"></div><div class="k" style="left:1.6px;top:3.0px;width:7.7px;height:4.2px;background:#fff;border-radius:3px"></div><div class="k" style="left:2.3px;top:3.5px;width:3.7px;height:3.2px;background:#0e47d7;border-radius:50%;opacity:.25"></div><div class="tx" style="left:11.5px;top:4.7px;font-size:8px;font-weight:700;color:#9dbcf5;transform:scale(0.325)">ACME</div><div class="k" style="left:155.1px;top:2.0px;width:37.1px;height:6.2px;background:#0b39b2;border-radius:3px"></div><div class="k" style="left:197.9px;top:3.5px;width:3.5px;height:3.5px;background:#8fb0f3;border-radius:1px"></div><div class="k" style="left:201.8px;top:1.5px;width:2.0px;height:2.0px;background:#f2413a;border-radius:50%"></div><div class="k" style="left:207.8px;top:3.7px;width:3.5px;height:3.0px;background:#8fb0f3;border-radius:50%"></div><div class="k" style="left:217.2px;top:2.0px;width:6.2px;height:6.2px;background:#e9d6c8;border-radius:50%"></div><div class="k" style="left:218.9px;top:3.2px;width:2.7px;height:2.7px;background:#c0392b;border-radius:50%"></div><div class="k" style="left:2.3px;top:11.9px;width:7.7px;height:7.7px;background:#d9dde6;border-radius:50%"></div><div class="k" style="left:4.0px;top:13.4px;width:4.2px;height:5.0px;background:#b9876a;border-radius:50%"></div><div class="tx" style="left:13.2px;top:14.0px;font-size:8px;font-weight:700;color:#4a5166;transform:scale(0.350)">Jack Gomez</div><div class="tx" style="left:13.2px;top:17.1px;font-size:8px;font-weight:400;color:#a3a9b8;transform:scale(0.275)">Customer</div><div class="k" style="left:36.0px;top:14.4px;width:3.0px;height:2.5px;background:#b5bbc8;border-radius:1px"></div><div class="tx" style="left:2.8px;top:28.0px;font-size:8px;font-weight:400;color:#62a4f2;transform:scale(0.312)">CREDIT CARDS</div><div class="k" style="left:3.3px;top:32.7px;width:3.2px;height:3.2px;background:#2f80ed;border-radius:50%"></div><div class="tx" style="left:9.0px;top:33.8px;font-size:8px;font-weight:700;color:#4a5166;transform:scale(0.350)">Credit cards</div><div class="k" style="left:35.7px;top:33.4px;width:1.0px;height:1.5px;background:#c5cad6;"></div><div class="k" style="left:3.3px;top:38.6px;width:3.2px;height:3.2px;background:#2f80ed;border-radius:50%"></div><div class="tx" style="left:9.0px;top:39.8px;font-size:8px;font-weight:700;color:#4a5166;transform:scale(0.350)">Debit cards</div><div class="k" style="left:35.7px;top:39.4px;width:1.0px;height:1.5px;background:#c5cad6;"></div><div class="tx" style="left:2.8px;top:47.1px;font-size:8px;font-weight:400;color:#62a4f2;transform:scale(0.312)">LENDING</div><div class="k" style="left:3.3px;top:51.7px;width:3.2px;height:3.2px;background:#2f80ed;border-radius:50%"></div><div class="tx" style="left:9.0px;top:52.9px;font-size:8px;font-weight:700;color:#4a5166;transform:scale(0.350)">Loans</div><div class="k" style="left:35.7px;top:52.5px;width:1.0px;height:1.5px;background:#c5cad6;"></div><div class="k" style="left:3.3px;top:57.7px;width:3.2px;height:3.2px;background:#2f80ed;border-radius:50%"></div><div class="tx" style="left:9.0px;top:58.8px;font-size:8px;font-weight:700;color:#4a5166;transform:scale(0.350)">Mortgages</div><div class="k" style="left:35.7px;top:58.4px;width:1.0px;height:1.5px;background:#c5cad6;"></div><div class="tx" style="left:77.1px;top:15.500px;font-size:8px;font-weight:700;color:#ee1c28;transform:scale(0.517,0.64)">Your nearest branch closes in: 29m 5s</div><div class="k" style="left:181.5px;top:14.4px;width:19.8px;height:4.5px;background:#1b8ef6;border-radius:1px"></div><div class="k" style="left:202.8px;top:14.4px;width:21.8px;height:4.5px;background:#10b42c;border-radius:1px"></div><div class="tx" style="left:47.4px;top:22.0px;font-size:8px;font-weight:700;color:#3a4158;transform:scale(0.388)">Financial Overview</div><div class="k" style="left:47.4px;top:26.7px;width:4.5px;height:1.2px;background:#2f80ed;"></div><div class="tx" style="left:67.2px;top:39.4px;font-size:8px;font-weight:400;color:#b3b8c6;transform:scale(0.325)">Total Balance</div><div class="tx" style="left:128.6px;top:39.4px;font-size:8px;font-weight:400;color:#b3b8c6;transform:scale(0.325)">Credit Available</div><div class="tx" style="left:191.0px;top:39.4px;font-size:8px;font-weight:400;color:#b3b8c6;transform:scale(0.325)">Due Today</div><div class="tx" style="left:67.2px;top:44.3px;font-size:8px;font-weight:700;color:#2c3245;transform:scale(0.840)">$350</div><div class="tx" style="left:83.3px;top:46.8px;font-size:8px;font-weight:700;color:#e3222c;transform:scale(0.325)">-5%</div><div class="tx" style="left:128.6px;top:44.3px;font-size:8px;font-weight:700;color:#2c3245;transform:scale(0.840)">$17,800</div><div class="tx" style="left:191.0px;top:44.3px;font-size:8px;font-weight:700;color:#d42a35;transform:scale(0.840)">$180</div><div class="k" style="left:67.2px;top:51.5px;width:18.6px;height:3px;background:#b5d3f8;border-bottom:.8px solid #5aa0f3"></div><div class="k" style="left:128.6px;top:51.5px;width:20.3px;height:3px;background:#b5d3f8;border-bottom:.8px solid #5aa0f3"></div><div class="k" style="left:191.0px;top:51.5px;width:10.4px;height:3px;background:#f6cdb0;border-bottom:.8px solid #f0a070"></div><div class="tx" style="left:47.4px;top:67.1px;font-size:8px;font-weight:700;color:#3a4158;transform:scale(0.388)">Recent Transactions</div><div class="k" style="left:47.4px;top:71.6px;width:4.5px;height:1.2px;background:#2f80ed;"></div><div class="k" style="left:47.4px;top:73.3px;width:177.3px;height:0.4px;background:#dfe3ea;"></div><div class="tx" style="left:50.3px;top:80.4px;font-size:8px;font-weight:700;color:#b9bfcc;transform:scale(0.287)">STATUS</div><div class="tx" style="left:75.1px;top:80.4px;font-size:8px;font-weight:700;color:#b9bfcc;transform:scale(0.287)">DATE</div><div class="tx" style="left:105.5px;top:80.4px;font-size:8px;font-weight:700;color:#b9bfcc;transform:scale(0.287)">DESCRIPTION</div><div class="tx" style="left:173.1px;top:80.4px;font-size:8px;font-weight:700;color:#b9bfcc;transform:scale(0.287)">CATEGORY</div><div class="tx" style="left:214.5px;top:80.4px;font-size:8px;font-weight:700;color:#b9bfcc;transform:scale(0.287)">AMOUNT</div><div class="k" style="left:46.9px;top:83.7px;width:178.8px;height:8.9px;background:#fff;"></div><div class="k" style="left:49.6px;top:87.4px;width:1.5px;height:1.5px;background:#1fb141;border-radius:50%"></div><div class="tx" style="left:52.8px;top:87.9px;font-size:8px;font-weight:700;color:#5a6075;transform:scale(0.338)">Complete</div><div class="tx" style="left:75.1px;top:87.9px;font-size:8px;font-weight:700;color:#5a6075;transform:scale(0.338)">Today</div><div class="k" style="left:105.3px;top:85.7px;width:5.0px;height:5.0px;background:#1a5a55;border-radius:50%"></div><div class="tx" style="left:112.2px;top:88.0px;font-size:8px;font-weight:400;color:#6a7085;transform:scale(0.312)">Starbucks coffee</div><div class="k" style="left:169.4px;top:86.4px;width:20.8px;height:3.5px;background:#10b42c;border-radius:1px"></div><div class="tx" style="left:206.6px;top:87.7px;font-size:8px;font-weight:700;color:#10a32c;transform:scale(0.362)">+ 1,250 USD</div><div class="k" style="left:46.9px;top:93.6px;width:178.8px;height:8.9px;background:#fff;"></div><div class="k" style="left:49.6px;top:97.3px;width:1.5px;height:1.5px;background:#e5303a;border-radius:50%"></div><div class="tx" style="left:52.8px;top:97.8px;font-size:8px;font-weight:700;color:#5a6075;transform:scale(0.338)">Declined</div><div class="tx" style="left:75.1px;top:97.8px;font-size:8px;font-weight:700;color:#5a6075;transform:scale(0.338)">Jan 19th</div><div class="tx" style="left:105.3px;top:96.8px;font-size:8px;font-weight:700;color:#5b6ef5;transform:scale(0.500)">stripe</div><div class="tx" style="left:118.2px;top:97.9px;font-size:8px;font-weight:400;color:#6a7085;transform:scale(0.312)">Stripe Payment Processing</div><div class="k" style="left:174.1px;top:96.3px;width:10.6px;height:3.5px;background:#f0455a;border-radius:1px"></div><div class="tx" style="left:204.6px;top:97.6px;font-size:8px;font-weight:700;color:#10a32c;transform:scale(0.362)">+ 952.23 USD</div><div class="k" style="left:46.9px;top:103.7px;width:178.8px;height:8.9px;background:#fff;"></div><div class="k" style="left:49.6px;top:107.5px;width:1.5px;height:1.5px;background:#f59a23;border-radius:50%"></div><div class="tx" style="left:52.8px;top:107.9px;font-size:8px;font-weight:700;color:#5a6075;transform:scale(0.338)">Pending</div><div class="tx" style="left:75.1px;top:107.9px;font-size:8px;font-weight:700;color:#5a6075;transform:scale(0.338)">Yesterday</div><div class="k" style="left:105.3px;top:105.7px;width:5.0px;height:5.0px;background:#3a3f55;border-radius:50%"></div><div class="tx" style="left:112.2px;top:108.0px;font-size:8px;font-weight:400;color:#6a7085;transform:scale(0.312)">MailChimp Services</div><div class="k" style="left:174.1px;top:106.5px;width:11.4px;height:3.5px;background:#f5d9a6;border-radius:1px"></div><div class="tx" style="left:209.0px;top:107.8px;font-size:8px;font-weight:700;color:#e3222c;transform:scale(0.362)">- 320 USD</div><div class="k" style="left:46.9px;top:113.6px;width:178.8px;height:8.9px;background:#fff;"></div><div class="k" style="left:49.6px;top:117.4px;width:1.5px;height:1.5px;background:#f5b323;border-radius:50%"></div><div class="tx" style="left:52.8px;top:117.8px;font-size:8px;font-weight:700;color:#5a6075;transform:scale(0.338)">Pending</div><div class="tx" style="left:75.1px;top:117.8px;font-size:8px;font-weight:700;color:#5a6075;transform:scale(0.338)">Jan 23rd</div><div class="k" style="left:105.3px;top:115.6px;width:5.0px;height:5.0px;background:#f58a23;border-radius:50%"></div><div class="tx" style="left:112.2px;top:117.9px;font-size:8px;font-weight:400;color:#6a7085;transform:scale(0.312)">Shopify product</div><div class="k" style="left:173.6px;top:116.4px;width:11.9px;height:3.5px;background:#1b8ef6;border-radius:1px"></div><div class="tx" style="left:207.5px;top:117.7px;font-size:8px;font-weight:700;color:#10a32c;transform:scale(0.362)">+ 17.99 USD</div><div class="k" style="left:46.9px;top:123.8px;width:178.8px;height:8.9px;background:#fff;"></div><div class="k" style="left:49.6px;top:127.5px;width:1.5px;height:1.5px;background:#1fb141;border-radius:50%"></div><div class="tx" style="left:52.8px;top:128.0px;font-size:8px;font-weight:700;color:#5a6075;transform:scale(0.338)">Complete</div><div class="tx" style="left:75.1px;top:128.0px;font-size:8px;font-weight:700;color:#5a6075;transform:scale(0.338)">Jan 7th</div><div class="tx" style="left:105.3px;top:126.9px;font-size:8px;font-weight:700;color:#333;transform:scale(0.525)"><span style="color:#e5303a">e</span><span style="color:#2f6fed">b</span><span style="color:#f5b323">a</span><span style="color:#6ab42c">y</span></div><div class="tx" style="left:118.2px;top:128.1px;font-size:8px;font-weight:400;color:#6a7085;transform:scale(0.312)">Ebay Marketplace</div><div class="k" style="left:172.4px;top:126.5px;width:14.1px;height:3.5px;background:#f0455a;border-radius:1px"></div><div class="tx" style="left:209.0px;top:127.9px;font-size:8px;font-weight:700;color:#e3222c;transform:scale(0.362)">- 244 USD</div><div class="k" style="left:46.9px;top:133.9px;width:178.8px;height:8.9px;background:#fff;"></div><div class="k" style="left:49.6px;top:137.7px;width:1.5px;height:1.5px;background:#f5b323;border-radius:50%"></div><div class="tx" style="left:52.8px;top:138.1px;font-size:8px;font-weight:700;color:#5a6075;transform:scale(0.338)">Pending</div><div class="tx" style="left:75.1px;top:138.1px;font-size:8px;font-weight:700;color:#5a6075;transform:scale(0.338)">Jan 9th</div><div class="k" style="left:105.3px;top:135.9px;width:5.0px;height:5.0px;background:#e5303a;border-radius:50%"></div><div class="tx" style="left:112.2px;top:138.2px;font-size:8px;font-weight:400;color:#6a7085;transform:scale(0.312)">Templates Inc</div><div class="k" style="left:174.1px;top:136.7px;width:11.4px;height:3.5px;background:#1b8ef6;border-radius:1px"></div><div class="tx" style="left:208.3px;top:138.0px;font-size:8px;font-weight:700;color:#10a32c;transform:scale(0.362)">+ 340 USD</div><div class="k" style="left:-0.2px;top:159.9px;width:228.8px;height:0.7px;background:#e4e7ee;"></div><div class="k" style="left:-0.2px;top:160.7px;width:228.8px;height:12.6px;background:#f1f3f7;"></div>
</div>
<svg class="a" style="left:761.500px;top:650.700px" width="21" height="20" viewBox="0 0 21 20"><path d="M10.500 1.600 L13 7.300 L19.300 7.900 L14.500 12 L16 18.100 L10.500 14.800 L5 18.100 L6.500 12 L1.700 7.900 L8 7.300 Z" fill="none" stroke="#8f8f8f" stroke-width="1.100" stroke-linejoin="round"/></svg>
<div class="t" style="left:788px;top:654.300px;font-size:14.900px;color:#222">2/2 Main page</div>

<!-- scrollbars -->
<div class="a" style="left:1531px;top:361px;width:11px;height:580px;background:#a6dbd5"></div>
<div class="a" style="left:1531px;top:361px;width:11px;height:415px;background:#008c7e"></div>
<div class="a" style="left:361px;top:941px;width:1170px;height:11px;background:#a6dbd5"></div>
<div class="a" style="left:361px;top:941px;width:946px;height:11px;background:#008c7e"></div>
<div class="a" style="left:1435.300px;top:929px;width:63px;height:24px;background:#00534d;border-radius:4px 4px 0 0"></div>
<svg class="a" style="left:1459px;top:930.500px" width="17" height="19" viewBox="0 0 17 19"><path d="M3 1 H13.600 Q15.700 1 15.700 3 V17.400 L12.600 15 H3 Q1 15 1 13 V3 Q1 1 3 1 Z" fill="#dbe9ee"/><path d="M4.600 11 Q8.400 13 12.200 11" stroke="#00534d" stroke-width="1.200" fill="none"/></svg>
<div class="a" style="left:59px;top:40px;width:1482px;height:1px;background:rgba(255,255,255,.2)"></div>
<!--MAIN-->
</div></div>
</body></html>
